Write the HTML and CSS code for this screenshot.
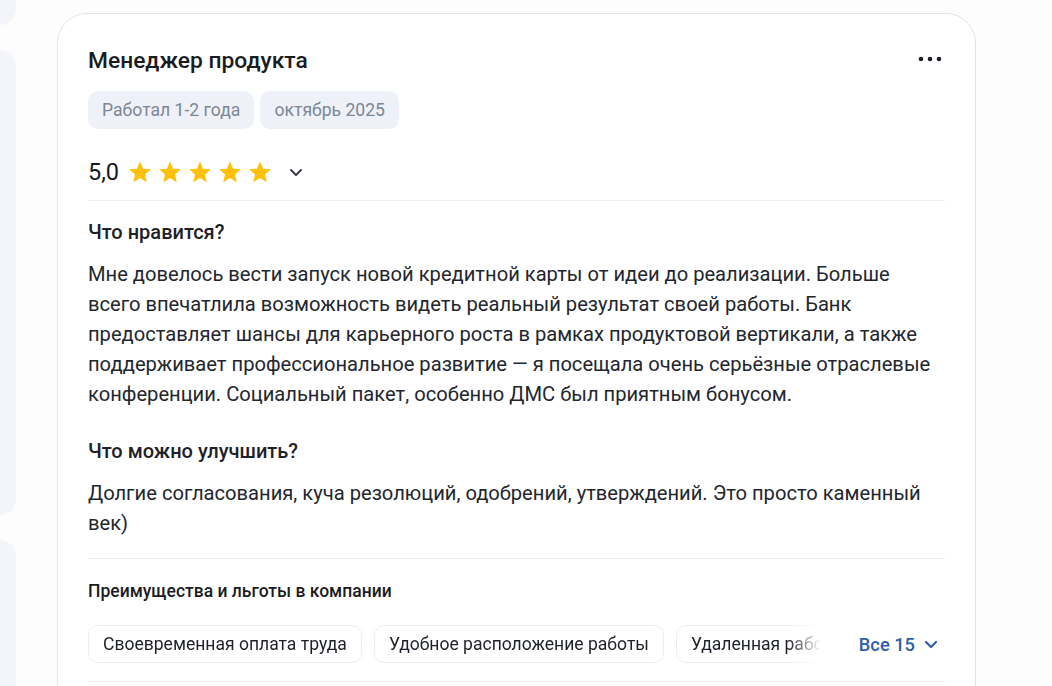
FILE: index.html
```html
<!DOCTYPE html>
<html lang="ru">
<head>
<meta charset="utf-8">
<title>Отзыв</title>
<link rel="stylesheet" href="styles.css">
</head>
<body>
<div class="layout">
  <aside class="side">
    <div class="side-card side-card-1"></div>
    <div class="side-card side-card-2"></div>
    <div class="side-card side-card-3"></div>
  </aside>
  <main class="main">
    <article class="review">
      <header class="review-head">
        <h2 class="title">Менеджер продукта</h2>
        <button class="more" aria-label="Ещё">
          <svg width="24" height="6" viewBox="0 0 24 6"><circle cx="3" cy="3" r="2.3" fill="#1c1f26"/><circle cx="12" cy="3" r="2.3" fill="#1c1f26"/><circle cx="21" cy="3" r="2.3" fill="#1c1f26"/></svg>
        </button>
      </header>
      <div class="tags">
        <span class="tag">Работал 1-2 года</span>
        <span class="tag">октябрь 2025</span>
      </div>
      <div class="rating">
        <span class="score">5,0</span>
        <span class="stars">
          <svg class="star" viewBox="0 0 24 24"><path d="M12 1.5l3.1 7.2 7.8.67-5.92 5.13 1.78 7.65L12 18.1l-6.76 4.05 1.78-7.65L1.1 9.37l7.8-.67z" fill="#ffc107"/></svg>
          <svg class="star" viewBox="0 0 24 24"><path d="M12 1.5l3.1 7.2 7.8.67-5.92 5.13 1.78 7.65L12 18.1l-6.76 4.05 1.78-7.65L1.1 9.37l7.8-.67z" fill="#ffc107"/></svg>
          <svg class="star" viewBox="0 0 24 24"><path d="M12 1.5l3.1 7.2 7.8.67-5.92 5.13 1.78 7.65L12 18.1l-6.76 4.05 1.78-7.65L1.1 9.37l7.8-.67z" fill="#ffc107"/></svg>
          <svg class="star" viewBox="0 0 24 24"><path d="M12 1.5l3.1 7.2 7.8.67-5.92 5.13 1.78 7.65L12 18.1l-6.76 4.05 1.78-7.65L1.1 9.37l7.8-.67z" fill="#ffc107"/></svg>
          <svg class="star" viewBox="0 0 24 24"><path d="M12 1.5l3.1 7.2 7.8.67-5.92 5.13 1.78 7.65L12 18.1l-6.76 4.05 1.78-7.65L1.1 9.37l7.8-.67z" fill="#ffc107"/></svg>
        </span>
        <svg class="chev" width="14" height="9" viewBox="0 0 14 9"><path d="M2 2l5 5 5-5" fill="none" stroke="#3a3d44" stroke-width="2" stroke-linecap="round" stroke-linejoin="round"/></svg>
      </div>
      <section class="block">
        <h3 class="block-title">Что нравится?</h3>
        <p class="text">Мне довелось вести запуск новой кредитной карты от идеи до реализации. Больше всего впечатлила возможность видеть реальный результат своей работы. Банк предоставляет шансы для карьерного роста в рамках продуктовой вертикали, а также поддерживает профессиональное развитие — я посещала очень серьёзные отраслевые конференции. Социальный пакет, особенно ДМС был приятным бонусом.</p>
        <h3 class="block-title second">Что можно улучшить?</h3>
        <p class="text">Долгие согласования, куча резолюций, одобрений, утверждений. Это просто каменный век)</p>
      </section>
      <section class="benefits">
        <h4 class="benefits-title">Преимущества и льготы в компании</h4>
        <div class="benefits-row">
          <div class="chips">
            <span class="chip">Своевременная оплата труда</span>
            <span class="chip">Удобное расположение работы</span>
            <span class="chip">Удаленная работа</span>
          </div>
          <button class="all">Все 15
            <svg width="14" height="9" viewBox="0 0 14 9"><path d="M2 2l5 5 5-5" fill="none" stroke="#2f5ea8" stroke-width="2.2" stroke-linecap="round" stroke-linejoin="round"/></svg>
          </button>
        </div>
      </section>
      <div class="bottom-line"></div>
    </article>
  </main>
</div>
</body>
</html>
```

FILE: styles.css
```css
* { box-sizing: border-box; }
html, body {
  margin: 0;
  padding: 0;
  height: 100%;
  overflow: hidden;
  background: #fdfdfe;
  font-family: Roboto, "Noto Sans", Arial, sans-serif;
  color: #1e2128;
}
.layout {
  display: flex;
  height: 686px;
  overflow: hidden;
}
.side {
  width: 16px;
  flex: none;
  display: flex;
  flex-direction: column;
  gap: 25px;
}
.side-card {
  background: #f4f5fa;
  border-radius: 0 16px 16px 0;
  flex: none;
}
.side-card-1 { height: 25px; border-radius: 0 0 16px 0; }
.side-card-2 { height: 465px; }
.side-card-3 { height: 400px; border-radius: 0 16px 0 0; }
.main {
  flex: 1;
  padding: 13px 0 0 41px;
}
.review {
  width: 919px;
  height: 760px;
  background: #fff;
  border: 1px solid #dfe3ea;
  border-radius: 30px;
  padding: 32px 30px 0 30px;
}
.review-head {
  display: flex;
  justify-content: space-between;
  align-items: center;
  height: 30px;
}
.title {
  margin: 0;
  font-size: 22.8px;
  font-weight: 500;
  line-height: 30px;
  color: #1a1c22;
}
.more {
  border: 0;
  background: none;
  padding: 0;
  margin-right: 3px;
  margin-top: -5px;
  display: flex;
}
.tags {
  display: flex;
  gap: 6px;
  margin-top: 15px;
}
.tag {
  background: #eef1f7;
  color: #7d8696;
  font-size: 17.6px;
  line-height: 38px;
  height: 38px;
  padding: 0 14px;
  border-radius: 10px;
}
.rating {
  display: flex;
  align-items: center;
  margin-top: 28px;
  border-bottom: 1px solid #eef0f5;
  padding: 0 0 13px;
}
.score {
  font-size: 23.5px;
  color: #16181d;
  line-height: 30px;
  margin-right: 9px;
}
.stars {
  display: flex;
  gap: 6px;
}
.star {
  width: 24px;
  height: 24px;
}
.chev {
  margin-left: 17px;
}
.block {
  padding-top: 17px;
}
.block-title {
  margin: 0;
  font-size: 20px;
  font-weight: 500;
  line-height: 28px;
  color: #1e2128;
}
.block-title.second { margin-top: 28px; }
.text {
  margin: 13px 0 0;
  max-width: 852px;
  font-size: 20.15px;
  line-height: 30px;
  color: #23262d;
}
.benefits {
  margin-top: 20px;
  border-top: 1px solid #eef0f5;
  padding-top: 20px;
}
.benefits-title {
  margin: 0;
  font-size: 17.5px;
  font-weight: 500;
  line-height: 24px;
  color: #1a1c22;
}
.benefits-row {
  display: flex;
  align-items: center;
  margin-top: 22px;
}
.chips {
  flex: none;
  width: 733px;
  display: flex;
  gap: 12px;
  overflow: hidden;
  -webkit-mask-image: linear-gradient(to right, #000 700px, transparent 733px);
  mask-image: linear-gradient(to right, #000 700px, transparent 733px);
}
.chip {
  flex: none;
  border: 1px solid #eceef4;
  border-radius: 10px;
  height: 38px;
  line-height: 36px;
  padding: 0 14px;
  font-size: 17.55px;
  color: #1e2128;
  background: #fff;
}
.all {
  margin-left: auto;
  border: 0;
  background: none;
  font-family: inherit;
  font-size: 18.3px;
  font-weight: 500;
  color: #2f5ea8;
  display: flex;
  align-items: center;
  gap: 9px;
  padding: 0 7px 0 0;
}
.bottom-line {
  margin-top: 18px;
  border-top: 1px solid #eef0f5;
}
```
